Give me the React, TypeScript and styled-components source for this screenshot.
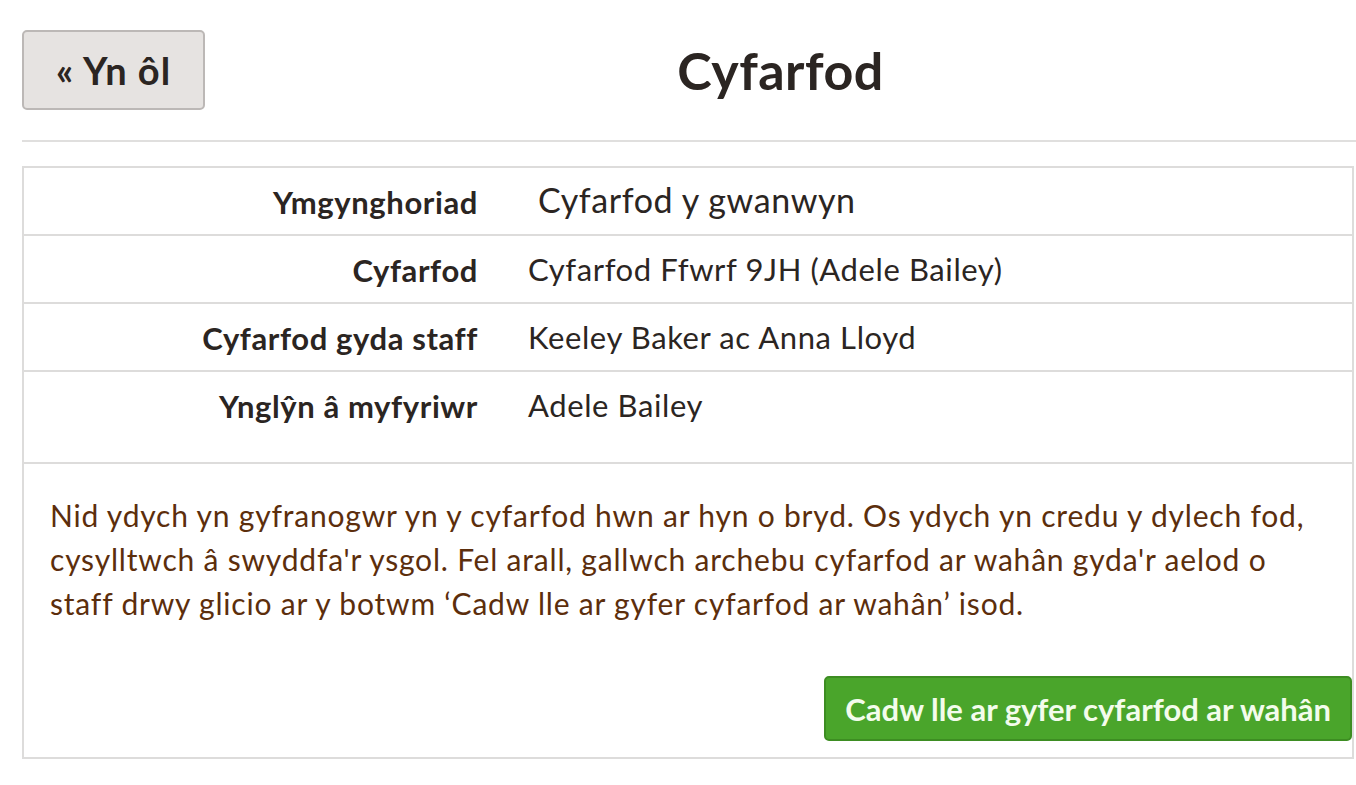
import React from 'react';
import styled, { createGlobalStyle } from 'styled-components';

const GlobalStyle = createGlobalStyle`
  html, body {
    margin: 0;
    padding: 0;
    background: #ffffff;
  }
  body {
    font-family: 'Lato', 'Open Sans', sans-serif;
    color: #2b2522;
  }
`;

const rows = [
  { label: 'Ymgynghoriad', value: 'Cyfarfod y gwanwyn', lead: true },
  { label: 'Cyfarfod', value: 'Cyfarfod Ffwrf 9JH (Adele Bailey)' },
  { label: 'Cyfarfod gyda staff', value: 'Keeley Baker ac Anna Lloyd' },
  { label: 'Ynglŷn â myfyriwr', value: 'Adele Bailey', tall: true },
];

const App: React.FC = () => {
  return (
    <Page>
      <GlobalStyle />
      <Header>
        <BackButton>« Yn ôl</BackButton>
        <Title>Cyfarfod</Title>
      </Header>
      <Divider />

      <Panel>
        {rows.map((row) => (
          <Row key={row.label} $tall={row.tall}>
            <Label>{row.label}</Label>
            <Value $lead={row.lead}>{row.value}</Value>
          </Row>
        ))}

        <Notice>
          <Message>
            Nid ydych yn gyfranogwr yn y cyfarfod hwn ar hyn o bryd. Os ydych yn credu y dylech fod,
            <br />
            cysylltwch â swyddfa'r ysgol. Fel arall, gallwch archebu cyfarfod ar wahân gyda'r aelod o
            <br />
            staff drwy glicio ar y botwm ‘Cadw lle ar gyfer cyfarfod ar wahân’ isod.
          </Message>
          <Actions>
            <BookButton>Cadw lle ar gyfer cyfarfod ar wahân</BookButton>
          </Actions>
        </Notice>
      </Panel>
    </Page>
  );
};

export default App;


const Page = styled.div`
  padding: 30px 0 0 22px;
  width: 1356px;
  box-sizing: border-box;
`;

const Header = styled.div`
  display: flex;
  align-items: center;
  height: 79px;
`;

const BackButton = styled.button`
  width: 183px;
  height: 80px;
  box-sizing: border-box;
  padding: 0;
  background: #e6e3e1;
  border: 2px solid #bcb8b6;
  border-radius: 5px;
  font-family: 'Lato', sans-serif;
  font-weight: 700;
  font-size: 38px;
  letter-spacing: 1px;
  color: #2b2522;
  cursor: pointer;
`;

const Title = styled.h1`
  flex: 1;
  margin: 0;
  text-align: center;
  font-size: 52px;
  font-weight: 700;
  letter-spacing: 0.5px;
  color: #2b2522;
`;

const Divider = styled.div`
  margin-top: 31px;
  height: 2px;
  background: #e0dfde;
`;

const Panel = styled.div`
  margin-top: 24px;
  width: 1332px;
  box-sizing: border-box;
  border: 2px solid #dddcdb;
`;

const Row = styled.div<{ $tall?: boolean }>`
  display: grid;
  grid-template-columns: 454px 1fr;
  column-gap: 50px;
  align-items: start;
  box-sizing: border-box;
  height: ${(p) => (p.$tall ? '92px' : '68px')};
  padding-top: 15px;
  border-bottom: 2px solid #dddcdb;
`;

const Label = styled.div`
  text-align: right;
  font-size: 31px;
  font-weight: 700;
  letter-spacing: 0.6px;
  line-height: 38px;
  color: #2b2522;
`;

const Value = styled.div<{ $lead?: boolean }>`
  padding-left: ${(p) => (p.$lead ? '10px' : '0')};
  font-size: ${(p) => (p.$lead ? '34px' : '31px')};
  letter-spacing: ${(p) => (p.$lead ? '0.6px' : '0.6px')};
  line-height: ${(p) => (p.$lead ? '34px' : '36px')};
  color: #2b2522;
`;

const Notice = styled.div`
  padding: 29px 0 16px 26px;
`;

const Message = styled.p`
  margin: 0;
  font-size: 30px;
  letter-spacing: 0.8px;
  line-height: 44px;
  white-space: nowrap;
  color: #5c2e0c;
`;

const Actions = styled.div`
  display: flex;
  justify-content: flex-end;
  margin-top: 51px;
`;

const BookButton = styled.button`
  height: 65px;
  padding: 0 19px;
  background: #4aa52b;
  border: 2px solid #3d8d22;
  border-radius: 5px;
  font-family: 'Lato', sans-serif;
  font-weight: 700;
  font-size: 31px;
  color: #f3fcec;
  cursor: pointer;
`;
